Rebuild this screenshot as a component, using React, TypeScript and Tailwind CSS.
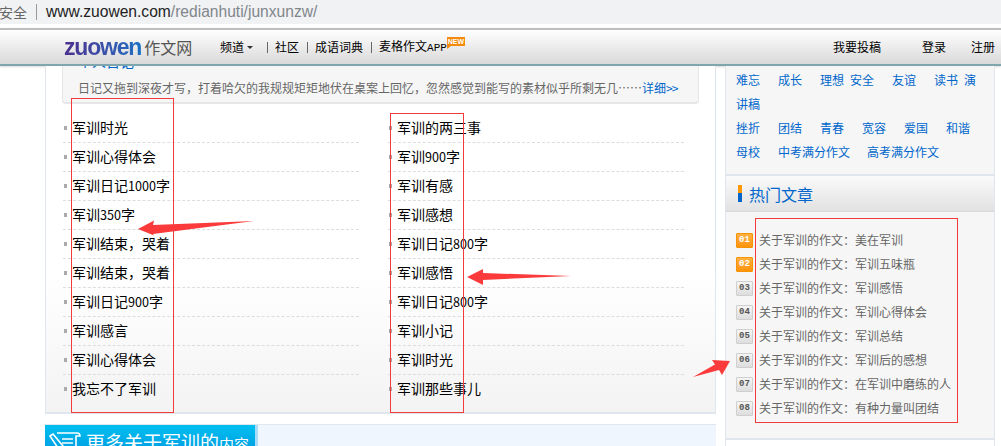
const cjk = "font-['Noto_Sans_CJK_SC','Noto_Sans_CJK_JP',sans-serif]";
const COMMA = '\uFF0C';
const COLON = '\uFF1A';

const leftList = ['军训时光', '军训心得体会', '军训日记1000字', '军训350字', `军训结束${COMMA}哭着`, `军训结束${COMMA}哭着`, '军训日记900字', '军训感言', '军训心得体会', '我忘不了军训'];
const rightList = ['军训的两三事', '军训900字', '军训有感', '军训感想', '军训日记800字', '军训感悟', '军训日记800字', '军训小记', '军训时光', '军训那些事儿'];
const hot = ['美在军训', '军训五味瓶', '军训感悟', '军训心得体会', '军训总结', '军训后的感想', '在军训中磨练的人', '有种力量叫团结'];

function Digits({ text }: { text: string }) {
  return (
    <>
      {text.split(/(\d+)/).map((part, i) =>
        /\d/.test(part) ? (
          <span key={i} className="text-[12.6px]">{part}</span>
        ) : (
          <span key={i}>{part}</span>
        ),
      )}
    </>
  );
}

function Column({ items }: { items: string[] }) {
  return (
    <ul className="w-[296px]">
      {items.map((t, i) => (
        <li
          key={i}
          className={`flex h-[29px] items-center pb-[1px] text-[14px] text-black border-b border-dashed ${i < items.length - 1 ? 'border-[#dddddd]' : 'border-transparent'}`}
        >
          <span className="ml-[1px] mr-[5px] h-[4px] w-[3px] bg-[#aaaaaa]" />
          <span className="whitespace-nowrap"><Digits text={t} /></span>
        </li>
      ))}
    </ul>
  );
}

function Nav() {
  return (
    <header className="flex h-[38px] items-center border-t-2 border-b-2 border-t-[#bdbdbd] border-b-[#7fa6ad] bg-gradient-to-b from-white to-[#d9d9d9] text-[12px] text-black shadow-[0_1px_2px_rgba(0,0,0,0.15)]">
      <div className="ml-[64px] flex w-[127px] shrink-0 items-center whitespace-nowrap">
        <span className="bg-gradient-to-r from-[#4a2f8e] via-[#3a4fa8] to-[#1570c4] bg-clip-text font-['Liberation_Sans',sans-serif] text-[23px] leading-none font-bold tracking-[-1.2px] text-transparent">zuowen</span>
        <span className="ml-[3px] text-[16px] leading-none text-[#555555]">作文网</span>
      </div>
      <span className="ml-[29px]">频道</span>
      <span className="ml-[3px] mt-[1px] h-0 w-0 border-x-[3px] border-t-[3px] border-x-transparent border-t-[#333333]" />
      <span className="ml-[14px] h-[11px] w-px bg-[#666666]" />
      <span className="ml-[7px]">社区</span>
      <span className="ml-[8px] h-[11px] w-px bg-[#666666]" />
      <span className="ml-[7px]">成语词典</span>
      <span className="ml-[8px] h-[11px] w-px bg-[#666666]" />
      <span className="ml-[7px]">麦格作文<span className="font-['Liberation_Mono',monospace] text-[11px]">APP</span></span>
      <span className="relative -top-[6px] flex h-[9px] w-[18px] items-center justify-center bg-[#f58a0c] font-['Liberation_Sans',sans-serif] text-[7px] leading-none font-bold text-white">
        NEW
        <span className="absolute top-[9px] left-0 h-0 w-0 border-t-[3px] border-r-[4px] border-t-[#f58a0c] border-r-transparent" />
      </span>
      <span className="ml-[368px]">我要投稿</span>
      <span className="ml-[41px]">登录</span>
      <span className="ml-[25px]">注册</span>
    </header>
  );
}

function Links() {
  const rows: [string, number][][] = [
    [['难忘', 18], ['成长', 18], ['理想', 6], ['安全', 18], ['友谊', 18], ['读书', 6], ['演', 0]],
    [['讲稿', 0]],
    [['挫折', 18], ['团结', 18], ['青春', 18], ['宽容', 18], ['爱国', 18], ['和谐', 0]],
    [['母校', 18], ['中考满分作文', 17], ['高考满分作文', 0]],
  ];
  return (
    <div className="h-[110px] border-x border-b-2 border-[#dfe6ee] bg-[#f6f6f6] pt-[2px] pl-[10px] text-[12px] text-[#0066cc]">
      {rows.map((row, i) => (
        <div key={i} className="flex h-[24px] items-center">
          {row.map(([t, g], j) => (
            <span key={j} style={{ marginRight: g }}>{t}</span>
          ))}
        </div>
      ))}
    </div>
  );
}

function Hot() {
  return (
    <div className="h-[262px] border-x border-[#dfe6ee] bg-[#f6f6f6]">
      <div className="flex h-[36px] items-center border-b border-[#d9d9d9] bg-gradient-to-b from-[#fafafa] to-[#e2e2e2] pl-[12px]">
        <span className="flex h-[17px] w-[4px] flex-col">
          <span className="h-[8px] bg-[#ff9900]" />
          <span className="h-[9px] bg-[#0066cc]" />
        </span>
        <span className="ml-[7px] text-[16px] text-[#0066cc]">热门文章</span>
      </div>
      <ul className="pt-[16px] pl-[10px]">
        {hot.map((t, i) => (
          <li key={i} className="flex h-[24px] items-center text-[12px] text-[#666666]">
            <span
              className={`flex h-[15px] w-[17px] items-center justify-center rounded-[1px] border font-['Liberation_Mono',monospace] text-[9px] leading-none font-bold ${i < 2 ? 'border-[#f59300] bg-gradient-to-b from-[#ffb040] to-[#ff9400] text-white' : 'border-[#cfcfcf] bg-gradient-to-b from-[#f5f5f5] to-[#dddddd] text-[#555555]'}`}
            >
              0{i + 1}
            </span>
            <span className="ml-[6px] whitespace-nowrap">关于军训的作文{COLON}{t}</span>
          </li>
        ))}
      </ul>
    </div>
  );
}

function Annotations() {
  return (
    <>
      <span className="absolute top-[98px] left-[71px] h-[315px] w-[103px] border border-[#f23c3c]" />
      <span className="absolute top-[113px] left-[390px] h-[300px] w-[74px] border border-[#f23c3c]" />
      <span className="absolute top-[218px] left-[755px] h-[205px] w-[203px] border border-[#f23c3c]" />
      <svg className="absolute top-0 left-0 h-[446px] w-[1001px]" viewBox="0 0 1001 446">
        <polygon fill="#fb3b3b" points="138,229 154,220.5 153,225 254,221 153,234 154,235.5" />
        <polygon fill="#fb3b3b" points="467,277 483,269 483,273 571,276 483,280 483,285" />
        <polygon fill="#fb3b3b" points="693,377 715,364.5 712,360 730,361 722,375 719,370" />
      </svg>
    </>
  );
}

export default function App() {
  return (
    <div className={`relative h-[446px] w-[1001px] overflow-hidden bg-white ${cjk}`}>
      <div className="flex h-[24px] items-center overflow-hidden bg-[#f1f2f4] text-[14px] leading-none">
        <span className="-ml-[1px] w-[37px] shrink-0 text-[#666666]">安全</span>
        <span className="h-[16px] w-px bg-[#9a9a9a]" />
        <span className="ml-[9px] font-['Liberation_Sans',sans-serif] text-[15.6px] text-[#222222]">www.zuowen.com<span className="text-[#80868b]">/redianhuti/junxunzw/</span></span>
      </div>
      <div className="h-[4px] bg-white" />
      <Nav />
      <main className="flex h-[380px] items-start pl-[45px]">
        <div className="w-[671px]">
          <section className="h-[348px] border-x border-b-2 border-[#dfe6ee] bg-gradient-to-b from-white from-[60%] to-[#f3f3f3]">
            <div className="ml-[16px] h-[38px] w-[637px] overflow-hidden rounded-b-[4px] border-x border-b-2 border-[#e6e6e6] bg-[#f6f6f6] pl-[15px] text-[12px] text-[#666666]">
              <div className="-mt-[12px] h-[15px] text-[14px] leading-[15px] text-[#0066cc]">个人日记</div>
              <div className="mt-[12px] whitespace-nowrap leading-[14px]">日记又拖到深夜才写{COMMA}打着哈欠的我规规矩矩地伏在桌案上回忆{COMMA}忽然感觉到能写的素材似乎所剩无几……<span className="text-[#0066cc]">详细<span className="tracking-[-1px]">&gt;&gt;</span></span></div>
            </div>
            <div className="mt-[10px] flex gap-[29px] pl-[17px]">
              <Column items={leftList} />
              <Column items={rightList} />
            </div>
          </section>
          <section className="mt-[10px] flex h-[30px] border-t border-[#dfe6ee] bg-[#eff6fe]">
            <div className="flex h-[30px] w-[210px] items-start bg-gradient-to-b from-[#00c0f0] to-[#0098e0] pl-[4px] text-white">
              <svg width="32" height="24" viewBox="0 0 32 24" className="mt-[6px] shrink-0" fill="none" stroke="white" strokeWidth="1.6">
                <path d="M8 2h20c2 0 3 1 3 3H27v18H11" />
                <path d="M13 8h11M13 12h11M13 16h11" />
                <path d="M1 5l3-2 10 12-1 4-4-2z" />
              </svg>
              <span className="mt-[5px] ml-[5px] whitespace-nowrap text-[19px] leading-[24px]">更多关于军训的<span className="text-[15px]">内容</span></span>
            </div>
            <div className="h-[30px] w-[3px] bg-[#a9dcf8]" />
          </section>
        </div>
        <aside className="ml-[9px] w-[270px]">
          <Links />
          <Hot />
          <div className="h-[20px] border-x border-t-2 border-[#dfe6ee] bg-white" />
        </aside>
      </main>
      <Annotations />
    </div>
  );
}
